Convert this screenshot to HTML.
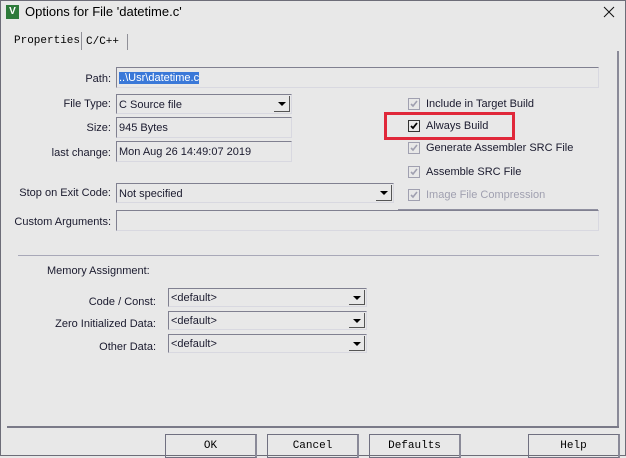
<!DOCTYPE html>
<html><head><style>
*{box-sizing:border-box}
body{margin:0;width:626px;height:456px;overflow:hidden;background:#e8e8e8;font-family:"Liberation Sans",sans-serif;font-size:11px;color:#1a1a2e;position:relative}
.a{position:absolute}
.lbl{position:absolute;text-align:right;white-space:nowrap;margin-top:1px}
.box{position:absolute;border-top:1px solid #808090;border-left:1px solid #808090;border-right:1px solid #d8d8e0;border-bottom:1px solid #d8d8e0;background:#e8e8e8;padding:2px 2px 0;white-space:nowrap;line-height:16px}
.arr{position:absolute;right:1px;top:1px;bottom:1px;width:16px;border-right:1px solid #555;border-bottom:1px solid #555;background:#e8e8e8}
.arr:after{content:"";position:absolute;left:4px;top:6px;border-left:4px solid transparent;border-right:4px solid transparent;border-top:4px solid #000}
.cb{position:absolute;width:12px;height:12px;border:1px solid #a0a0b0;background:#e8e8e8}
.cb svg{position:absolute;left:0;top:0}
.ct{position:absolute;white-space:nowrap;margin-top:1px}
.btn{position:absolute;top:434px;height:24px;width:92px;border:1px solid #707080;border-right:2px solid #8a8a98;text-align:center;font-family:"Liberation Mono",monospace;font-size:11px;line-height:22px;color:#000}
</style></head><body>
<div class="a" style="left:0;top:0;width:626px;height:456px;border:1px solid #6d6d78"></div>
<div class="a" style="left:6px;top:5px;width:13px;height:14px;background:#2d7a3a;color:#fff;font-size:10px;font-weight:bold;line-height:14px;text-align:center">V</div>
<div class="a" style="left:25px;top:4px;font-size:13px;color:#000">Options for File 'datetime.c'</div>
<svg class="a" style="left:603px;top:6px" width="12" height="12"><path d="M1 1L11 11M11 1L1 11" stroke="#111" stroke-width="1"/></svg>
<div class="a" style="left:14px;top:35px;font-family:'Liberation Mono',monospace;font-size:11px;color:#000">Properties</div>
<div class="a" style="left:81px;top:32px;width:1px;height:18px;background:#909098"></div>
<div class="a" style="left:86px;top:36px;font-family:'Liberation Mono',monospace;font-size:11px;color:#000">C/C++</div>
<div class="a" style="left:127px;top:34px;width:1px;height:16px;background:#909098"></div>
<div class="a" style="left:617px;top:51px;width:2px;height:377px;background:#8a8a98"></div>
<div class="a" style="left:7px;top:426px;width:612px;height:2px;background:#7a7a88"></div>

<div class="lbl" style="right:515px;top:72px">Path:</div>
<div class="box" style="left:116px;top:67px;width:483px;height:21px"><span style="background:#3a78d8;color:#fff">..\Usr\datetime.c</span></div>
<div class="lbl" style="right:515px;top:97px">File Type:</div>
<div class="box" style="left:116px;top:94px;width:176px;height:20px">C Source file<div class="arr"></div></div>
<div class="lbl" style="right:515px;top:121px">Size:</div>
<div class="box" style="left:116px;top:117px;width:176px;height:21px">945 Bytes</div>
<div class="lbl" style="right:515px;top:146px">last change:</div>
<div class="box" style="left:116px;top:141px;width:176px;height:21px">Mon Aug 26 14:49:07 2019</div>
<div class="lbl" style="right:515px;top:186px">Stop on Exit Code:</div>
<div class="box" style="left:116px;top:183px;width:278px;height:20px">Not specified<div class="arr"></div></div>
<div class="lbl" style="right:515px;top:215px">Custom Arguments:</div>
<div class="box" style="left:116px;top:210px;width:483px;height:21px"></div>
<div class="a" style="left:398px;top:209px;width:200px;height:1px;background:#9090a0"></div>
<div class="a" style="left:18px;top:255px;width:581px;height:1px;background:#a8a8b8"></div>
<div class="a" style="left:47px;top:265px">Memory Assignment:</div>
<div class="lbl" style="right:470px;top:295px">Code / Const:</div>
<div class="box" style="left:168px;top:288px;width:199px;height:19px;line-height:14px">&lt;default&gt;<div class="arr"></div></div>
<div class="lbl" style="right:470px;top:317px">Zero Initialized Data:</div>
<div class="box" style="left:168px;top:311px;width:199px;height:19px;line-height:14px">&lt;default&gt;<div class="arr"></div></div>
<div class="lbl" style="right:470px;top:340px">Other Data:</div>
<div class="box" style="left:168px;top:334px;width:199px;height:19px;line-height:14px">&lt;default&gt;<div class="arr"></div></div>

<div class="cb" style="left:408px;top:98px"><svg width="10" height="10"><path d="M2 5L4 7L8 2" stroke="#a0a0b0" stroke-width="1.6" fill="none"/></svg></div>
<div class="ct" style="left:426px;top:97px">Include in Target Build</div>
<div class="cb" style="left:408px;top:120px;border-color:#333"><svg width="10" height="10"><path d="M2 5L4 7L8 2" stroke="#000" stroke-width="1.8" fill="none"/></svg></div>
<div class="ct" style="left:426px;top:119px">Always Build</div>
<div class="a" style="left:384px;top:112px;width:131px;height:28px;border:3px solid #e0283a"></div>
<div class="cb" style="left:408px;top:142px"><svg width="10" height="10"><path d="M2 5L4 7L8 2" stroke="#a0a0b0" stroke-width="1.6" fill="none"/></svg></div>
<div class="ct" style="left:426px;top:141px">Generate Assembler SRC File</div>
<div class="cb" style="left:408px;top:166px"><svg width="10" height="10"><path d="M2 5L4 7L8 2" stroke="#a0a0b0" stroke-width="1.6" fill="none"/></svg></div>
<div class="ct" style="left:426px;top:165px">Assemble SRC File</div>
<div class="cb" style="left:408px;top:189px"><svg width="10" height="10"><path d="M2 5L4 7L8 2" stroke="#a0a0b0" stroke-width="1.6" fill="none"/></svg></div>
<div class="ct" style="left:426px;top:188px;color:#a0a0b0">Image File Compression</div>

<div class="btn" style="left:165px">OK</div>
<div class="btn" style="left:267px">Cancel</div>
<div class="btn" style="left:369px">Defaults</div>
<div class="btn" style="left:528px">Help</div>
</body></html>
